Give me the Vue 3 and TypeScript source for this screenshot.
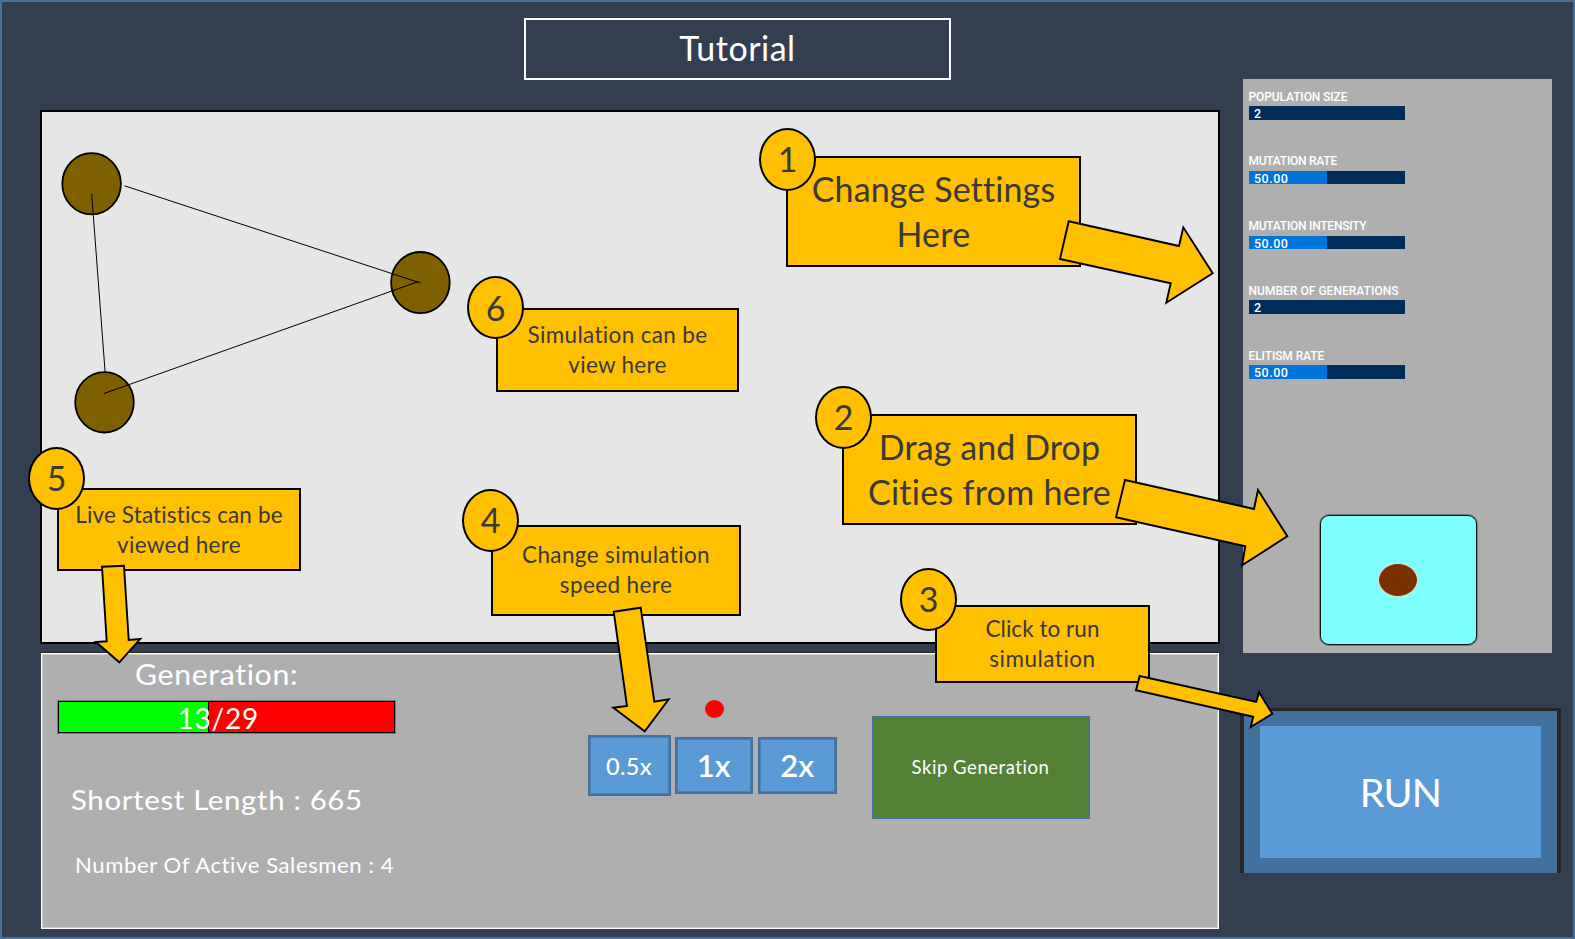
<script setup lang="ts">
interface Line { text: string; spacing: number }
interface Callout { id: number; large?: boolean; lines: Line[] }
interface Setting { label: string; value: string; fill: number; spacing: number }

const callouts: Callout[] = [
  { id: 1, large: true, lines: [{ text: 'Change Settings', spacing: 0.12 }, { text: 'Here', spacing: 0.3 }] },
  { id: 2, large: true, lines: [{ text: 'Drag and Drop', spacing: 0.1 }, { text: 'Cities from here', spacing: 0.28 }] },
  { id: 3, lines: [{ text: 'Click to run', spacing: 0.05 }, { text: 'simulation', spacing: 0.5 }] },
  { id: 4, lines: [{ text: 'Change simulation', spacing: 0.36 }, { text: 'speed here', spacing: 0.38 }] },
  { id: 5, lines: [{ text: 'Live Statistics can be', spacing: 0.14 }, { text: 'viewed here', spacing: 0.3 }] },
  { id: 6, lines: [{ text: 'Simulation can be', spacing: 0.34 }, { text: 'view here', spacing: 0.28 }] },
]

const settings: Setting[] = [
  { label: 'POPULATION SIZE', value: '2', fill: 0, spacing: -0.1 },
  { label: 'MUTATION RATE', value: '50.00', fill: 50, spacing: -0.25 },
  { label: 'MUTATION INTENSITY', value: '50.00', fill: 50, spacing: -0.25 },
  { label: 'NUMBER OF GENERATIONS', value: '2', fill: 0, spacing: 0.03 },
  { label: 'ELITISM RATE', value: '50.00', fill: 50, spacing: -0.1 },
]

const arrows: string[] = [
  '1068.7,221.3 1179,246 1183.3,227.3 1212.7,273.3 1166.3,302.7 1170.7,283.3 1060,259',
  '1125,480 1254,509 1258,490 1287.3,536.3 1242,565.3 1245.3,546.3 1116,517.3',
  '1139.7,676 1256.3,702 1259,692.3 1272.3,713.7 1250.7,727 1253.3,716.7 1136,690.3',
  '613.7,611.7 640.7,607.7 654.3,701.7 668.7,699.3 644.7,731.3 613.3,707.7 627,706',
  '102,566.7 124,565.7 128.7,640 140.3,639 119.3,662.3 96,642 106.7,641.3',
]
</script>

<template>
  <div class="page">
    <div class="left">
      <h1 class="title">Tutorial</h1>
      <div class="canvas"></div>
      <section class="stats">
        <div class="figures">
          <div class="generation">Generation:</div>
          <div class="progress">
            <div class="done"></div>
            <span class="count">13/29</span>
          </div>
          <div class="shortest">Shortest Length : 665</div>
          <div class="active">Number Of Active Salesmen : 4</div>
        </div>
        <div class="speed">
          <div class="dot"></div>
          <div class="buttons">
            <button class="half">0.5x</button>
            <button>1x</button>
            <button>2x</button>
          </div>
        </div>
        <button class="skip">Skip Generation</button>
      </section>
    </div>
    <div class="right">
      <section class="settings">
        <div v-for="s in settings" :key="s.label" class="setting">
          <div class="label" :style="{ letterSpacing: s.spacing + 'px' }">{{ s.label }}</div>
          <div class="slider">
            <div class="fill" :style="{ width: s.fill + '%' }"></div>
            <span class="value">{{ s.value }}</span>
          </div>
        </div>
        <div class="palette"><div class="city"></div></div>
      </section>
      <button class="run"><span>RUN</span></button>
    </div>

    <svg class="overlay" viewBox="0 0 1575 939">
      <g fill="#7f6000" stroke="#000" stroke-width="1.8">
        <ellipse cx="91.6" cy="183.8" rx="29.3" ry="30.6" />
        <ellipse cx="420.4" cy="282.6" rx="29.3" ry="30.6" />
        <ellipse cx="104.5" cy="402.3" rx="29.3" ry="30.2" />
      </g>
      <g stroke="#000" stroke-width="1">
        <line x1="91.7" y1="194" x2="105.1" y2="372" />
        <line x1="124.5" y1="185.8" x2="420.6" y2="283" />
        <line x1="104" y1="393.5" x2="418.5" y2="281.5" />
      </g>
    </svg>

    <div v-for="c in callouts" :key="c.id" class="callout" :class="['c' + c.id, { large: c.large }]">
      <div v-for="l in c.lines" :key="l.text" :style="{ letterSpacing: l.spacing + 'px' }">{{ l.text }}</div>
      <span class="badge">{{ c.id }}</span>
    </div>

    <svg class="overlay" viewBox="0 0 1575 939">
      <polygon v-for="a in arrows" :key="a" :points="a" fill="#ffc000" stroke="#000" stroke-width="1.9" />
    </svg>
  </div>
</template>

<style>
body {
  margin: 0;
  background: #333f50;
}
</style>

<style scoped>
* {
  box-sizing: border-box;
}
.page {
  position: relative;
  display: flex;
  width: 1575px;
  height: 939px;
  padding-left: 38px;
  border: 2px solid #41719c;
  background: #333f50;
  color: #fff;
  font-family: Lato, Carlito, sans-serif;
  font-variant-ligatures: none;
  white-space: nowrap;
  overflow: hidden;
}
button {
  margin: 0;
  padding: 0;
  color: #fff;
  font: inherit;
}
.left {
  flex: none;
  width: 1180px;
  padding-top: 16px;
}
.title {
  display: flex;
  align-items: center;
  justify-content: center;
  width: 427px;
  height: 62px;
  margin: 0 0 30px 484px;
  padding-bottom: 3px;
  border: 2px solid #fff;
  font-size: 34px;
  font-weight: 400;
  letter-spacing: 0.5px;
}
.canvas {
  height: 534px;
  border: 2px solid #000;
  background: #e6e6e6;
}
.stats {
  display: flex;
  width: 1178px;
  height: 277px;
  margin: 8px 0 0 1px;
  border-top: 1px solid #262626;
  background: #afafaf;
  box-shadow: inset 0 0 0 1px #fff, inset 0 0 0 2px #cdcdcd;
}
.figures {
  width: 546.5px;
  padding: 6px 0 0 17px;
  line-height: 30px;
}
.generation {
  margin-left: 76.5px;
  font-size: 28px;
  letter-spacing: 0.6px;
  transform: scaleX(1.08);
  transform-origin: left;
}
.progress {
  position: relative;
  width: 337px;
  height: 32px;
  margin-top: 12px;
  border: 1px solid #000;
  background: #f00;
  box-shadow: 0 0 0 1px rgba(0, 0, 0, 0.3);
}
.done {
  width: 150px;
  height: 100%;
  border-right: 1px solid #000;
  background: #0f0;
}
.count {
  position: absolute;
  top: 1px;
  left: 118.5px;
  font-size: 28px;
  letter-spacing: 0.8px;
}
.shortest {
  margin: 51.5px 0 0 13px;
  font-size: 27px;
  letter-spacing: 0.6px;
  transform: scaleX(1.089);
  transform-origin: left;
}
.active {
  margin: 35px 0 0 16.5px;
  font-size: 21px;
  letter-spacing: 0.55px;
  transform: scaleX(1.053);
  transform-origin: left;
}
.speed {
  padding-top: 46.5px;
}
.dot {
  width: 19px;
  height: 18px;
  margin-left: 117px;
  border-radius: 50%;
  background: #f00;
}
.buttons {
  display: flex;
  align-items: center;
  gap: 5px;
  margin-top: 17.5px;
}
.buttons button {
  width: 78.5px;
  height: 57px;
  border: 2px solid #41719c;
  background: #5b9bd5;
  box-shadow: inset 0 0 0 1px #4c80af;
  font-size: 31px;
  font-weight: 600;
  line-height: 53px;
}
.buttons .half {
  width: 83px;
  height: 61px;
  font-size: 23.5px;
  font-weight: 500;
  letter-spacing: 0.3px;
  line-height: 54px;
}
.buttons .half + button {
  margin-left: -1px;
}
.skip {
  width: 218px;
  height: 103px;
  margin: 63px 0 0 35px !important;
  border: 1px solid #41719c;
  background: #548235;
  box-shadow: inset 0 0 0 1px #4a7a68;
  font-size: 18.5px !important;
  line-height: 99px !important;
  letter-spacing: 0.55px;
}
.right {
  padding: 77px 0 0 20px;
}
.settings {
  width: 309px;
  height: 574px;
  margin-left: 3px;
  padding: 11.5px 0 0 5.5px;
  background: #afafaf;
  font-family: Roboto, sans-serif;
}
.setting {
  height: 64.8px;
}
.label {
  height: 14px;
  font-size: 12px;
  font-weight: 500;
  line-height: 13px;
}
.slider {
  position: relative;
  width: 156.5px;
  height: 13.5px;
  margin-top: 1.5px;
  background: #002d5a;
}
.fill {
  height: 100%;
  background: #0074d9;
}
.value {
  position: absolute;
  top: 0;
  left: 5.5px;
  font-size: 12.5px;
  font-weight: 500;
  line-height: 15px;
  letter-spacing: 0.5px;
}
.palette {
  display: flex;
  align-items: center;
  justify-content: center;
  width: 157px;
  height: 130px;
  margin: 101px 0 0 71.5px;
  border: 1px solid #111;
  border-radius: 9px;
  background: #7dffff;
  box-shadow: 0 0 0 1px rgba(30, 30, 30, 0.35);
}
.city {
  width: 40px;
  height: 34px;
  margin: 0 2px 1px 0;
  border: 1px solid #f0d8cc;
  border-radius: 50%;
  background: #7b3000;
}
.run {
  display: block;
  width: 321px;
  height: 165px;
  margin-top: 55px;
  padding: 15px 15px 15px 16px;
  border: solid #262626;
  border-width: 3px 4.5px 0;
  background: #41719c;
  font-size: 39.5px;
}
.run span {
  display: block;
  width: 281px;
  height: 132px;
  background: #5b9bd5;
  line-height: 131px;
  letter-spacing: -0.8px;
}
.overlay {
  position: absolute;
  top: -2px;
  left: -2px;
  width: 1575px;
  height: 939px;
}
.callout {
  position: absolute;
  display: flex;
  flex-direction: column;
  align-items: center;
  justify-content: center;
  border: 2px solid #000;
  background: #ffc000;
  color: #3b3838;
  font-size: 22.5px;
  line-height: 30px;
}
.callout.large {
  padding-bottom: 2px;
  font-size: 34px;
  line-height: 45px;
}
.badge {
  position: absolute;
  top: -30px;
  left: -29px;
  width: 57px;
  height: 63px;
  border: 2px solid #000;
  border-radius: 50%;
  background: #ffc000;
  font-size: 34px;
  line-height: 57px;
  text-align: center;
}
.c1 { top: 154px; left: 784px; width: 295px; height: 111px; }
.c2 { top: 412px; left: 840px; width: 295px; height: 111px; }
.c3 { top: 603px; left: 933px; width: 215px; height: 78px; }
.c4 { top: 523px; left: 489px; width: 250px; height: 91px; padding-bottom: 1px; }
.c5 { top: 486px; left: 55px; width: 244px; height: 83px; }
.c6 { top: 306px; left: 494px; width: 243px; height: 84px; }
.c3 .badge { top: -39px; left: -37px; }
.c4 .badge { top: -38px; left: -31px; }
.c5 .badge { top: -43px; left: -31px; }
.c6 .badge { top: -34px; left: -31px; line-height: 59px; }
.c3 .badge,
.c4 .badge,
.c5 .badge { line-height: 58px; }
</style>
